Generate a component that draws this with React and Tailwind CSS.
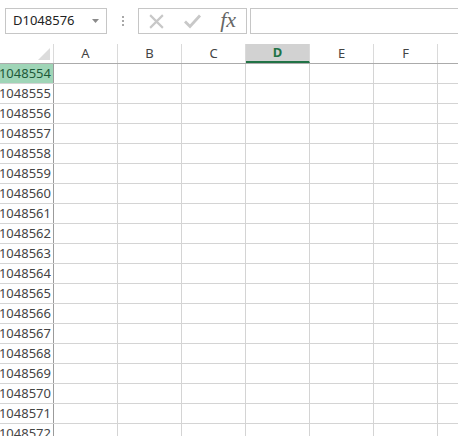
const cols = ['A', 'B', 'C', 'D', 'E', 'F', '']
const rows = Array.from({ length: 19 }, (_, i) => 1048554 + i)

export default function App() {
  return (
    <div className="h-[436px] w-[458px] overflow-hidden bg-white text-[#444]" style={{ fontFamily: '"Noto Sans", "Open Sans", sans-serif' }}>
      {/* formula bar */}
      <div className="flex h-[44px] items-start pt-[8px]">
        <div className="ml-[5px] flex h-[26px] w-[102px] items-center justify-between border border-[#c6c6c6] pl-[7px] pr-[5px]">
          <span className="text-[13px] text-[#222]">D1048576</span>
          <svg width="7" height="4" viewBox="0 0 7 4" className="mr-[2px]"><path d="M0 0h7L3.5 4z" fill="#8a8a8a" /></svg>
        </div>
        <div className="flex w-[31px] flex-col items-center justify-center gap-[2px] self-stretch pb-[10px]">
          <span className="h-[2px] w-[2px] bg-[#a8a8a8]" />
          <span className="h-[2px] w-[2px] bg-[#a8a8a8]" />
          <span className="h-[2px] w-[2px] bg-[#a8a8a8]" />
        </div>
        <div className="flex h-[26px] w-[109px] items-center border border-[#c6c6c6]">
          <div className="flex w-[36px] justify-center">
            <svg width="17" height="17" viewBox="0 0 16 16"><path d="M2 2l12 12M14 2L2 14" stroke="#c8c8c8" strokeWidth="2" /></svg>
          </div>
          <div className="flex w-[36px] justify-center">
            <svg width="19" height="16" viewBox="0 0 18 16"><path d="M1.5 8.5l5 5L16.5 2.5" stroke="#c8c8c8" strokeWidth="2.8" fill="none" /></svg>
          </div>
          <div className="flex w-[36px] justify-center pb-[2px]">
            <span className="text-[22px] italic leading-none text-[#666]" style={{ fontFamily: '"Liberation Serif", serif' }}>fx</span>
          </div>
        </div>
        <div className="ml-[3px] h-[26px] flex-1 border border-r-0 border-[#c6c6c6]" />
      </div>

      {/* column header */}
      <div className="flex h-[20px] border-b border-[#ababab] text-[13px]">
        <div className="relative w-[54px] shrink-0 border-r border-[#dadada]">
          <svg width="12" height="12" viewBox="0 0 12 12" className="absolute bottom-[3px] right-[3px]"><path d="M12 0v12H0z" fill="#dcdcdc" /></svg>
        </div>
        {cols.map((c, i) => (
          <div key={i} className={`flex w-[64px] shrink-0 items-center justify-center border-r border-[#dadada] ${c === 'D' ? 'border-b-2 border-b-[#217346] bg-[#d2d2d2] font-bold text-[#217346]' : ''}`}>
            {c}
          </div>
        ))}
      </div>

      {/* rows */}
      {rows.map((r, i) => (
        <div key={r} className="flex h-[20px] border-b border-[#d4d4d4] text-[13px]">
          <div className={`flex w-[54px] shrink-0 items-center justify-end border-r border-[#9b9b9b] pr-[2px] ${i === 0 ? 'bg-[#9fd5b7] text-[#1d5a39]' : 'text-[#444]'}`}>
            {r}
          </div>
          {cols.map((c, j) => (
            <div key={j} className="w-[64px] shrink-0 border-r border-[#d4d4d4]" />
          ))}
        </div>
      ))}
    </div>
  )
}
